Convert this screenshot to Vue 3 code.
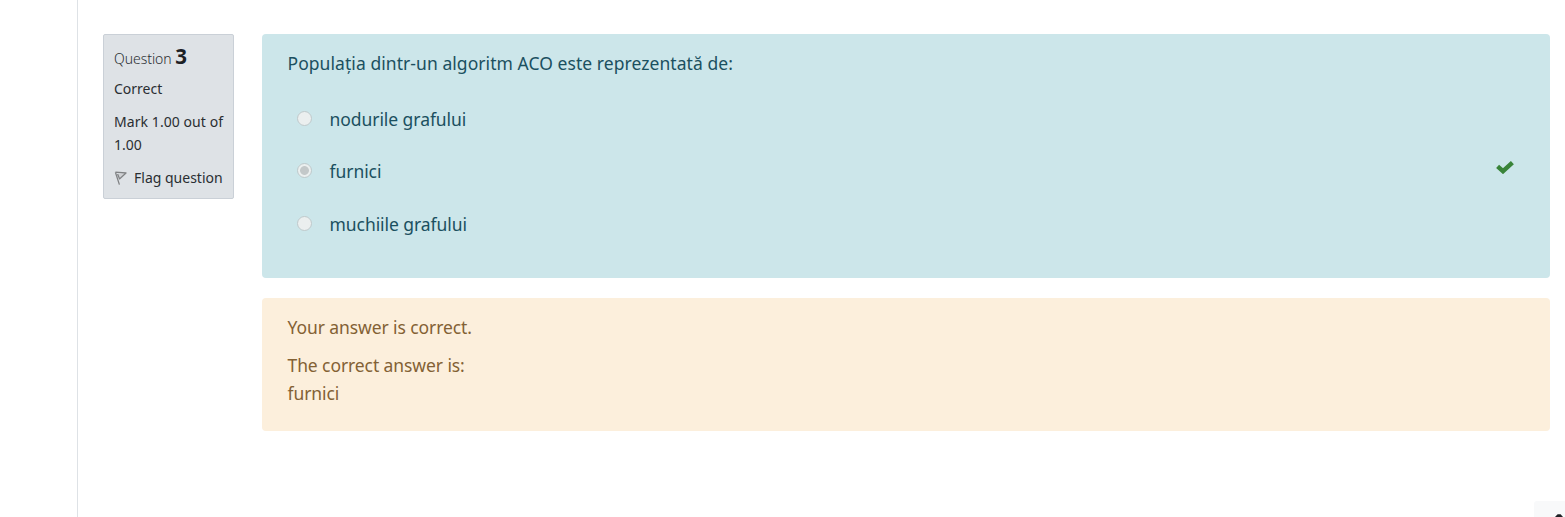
<script setup>
const answers = [
  { id: 'a', text: 'nodurile grafului', checked: false },
  { id: 'b', text: 'furnici', checked: true },
  { id: 'c', text: 'muchiile grafului', checked: false },
]
</script>

<template>
  <div class="page">
    <aside class="drawer"></aside>
    <main class="question">
      <section class="info">
        <h3 class="number">Question <b>3</b></h3>
        <div class="state">Correct</div>
        <div class="grade"><span class="mark">Mark 1.00 out of</span><br>1.00</div>
        <div class="flag">
          <svg class="flag-icon" viewBox="0 0 14 16" fill="none">
            <path d="M4.2 4h6L5.8 7.7Z" fill="#cfd1d4" />
            <path d="M1.4 2.2 12 3 5.2 9.2M1.4 2.2 5.4 14.6M3.6 4l1.8 4.4" stroke="#808284" stroke-width="1.3" stroke-linejoin="round" />
          </svg>
          <span>Flag question</span>
        </div>
      </section>
      <div class="content">
        <section class="formulation">
          <p class="prompt">Populația dintr-un algoritm ACO este reprezentată de:</p>
          <div v-for="answer in answers" :key="answer.id" class="answer">
            <span class="radio" :class="{ checked: answer.checked }"></span>
            <span class="label">{{ answer.text }}</span>
            <svg v-if="answer.checked" class="check" viewBox="0 0 18 14">
              <path d="M1.6 6.3 7 11.2 16.4 2.6" fill="none" stroke="#398439" stroke-width="4.4" />
            </svg>
          </div>
        </section>
        <section class="outcome">
          <p class="verdict">Your answer is correct.</p>
          <p class="right">The correct answer is:<br>furnici</p>
        </section>
      </div>
    </main>
    <div class="footer-button"><svg viewBox="0 0 8 4"><path d="M0 4 2.6 1.2h3L8 4Z" fill="#1d2125" /></svg></div>
  </div>
</template>

<style>
body {
  overflow: hidden;
  background: #fff;
}
</style>

<style scoped>
.page {
  position: relative;
  display: flex;
  height: 517px;
  overflow: hidden;
  font-family: "Noto Sans", "Open Sans", sans-serif;
  color: #2a2e32;
}
.drawer {
  box-sizing: border-box;
  flex: 0 0 78px;
  border-right: 1px solid #dee2e6;
}
.question {
  display: flex;
  flex: 1;
  align-items: flex-start;
  gap: 28px;
  padding: 34px 15px 0 25px;
}
.info {
  box-sizing: border-box;
  flex: 0 0 131px;
  height: 165px;
  padding: 10px 0 0 10px;
  border: 1px solid #cad0d7;
  border-radius: 2px;
  background: #dee2e6;
  font-size: 14px;
  line-height: 23px;
  white-space: nowrap;
}
.number {
  margin: 0;
  height: 23px;
  padding-top: 1px;
  font-size: 14px;
  font-weight: 300;
  line-height: 22px;
  letter-spacing: -0.05px;
}
.number b {
  color: #1d2125;
  font-size: 20.5px;
  font-weight: 700;
  line-height: 20px;
}
.state {
  margin-top: 8px;
}
.grade {
  margin-top: 10px;
}
.mark {
  letter-spacing: 0.07px;
}
.flag {
  display: flex;
  align-items: center;
  gap: 6px;
  margin-top: 10px;
}
.flag-icon {
  width: 14px;
  height: 16px;
}
.content {
  flex: 1;
}
.formulation,
.outcome {
  box-sizing: border-box;
  padding-left: 25.5px;
  border-radius: 4px;
  font-size: 17.5px;
  line-height: 28px;
}
.formulation {
  height: 244px;
  padding-top: 15px;
  background: #cce6ea;
  color: #1b5060;
}
.outcome {
  height: 133px;
  margin-top: 20px;
  padding-top: 15px;
  background: #fcefdc;
  color: #836134;
  letter-spacing: -0.09px;
}
p {
  margin: 0;
}
.prompt {
  margin-bottom: 15.7px;
  letter-spacing: 0.06px;
}
.answer {
  display: flex;
  align-items: center;
  height: 52.5px;
  padding-left: 9.5px;
}
.radio {
  box-sizing: border-box;
  width: 15px;
  height: 15px;
  margin: 0 17.5px 1px 0;
  border: 1px solid #bfc9cb;
  border-radius: 50%;
  background: #ebefef;
}
.radio.checked {
  background: radial-gradient(circle, #c3c8c9 0 4px, #ebefef 4.8px);
}
.label {
  letter-spacing: -0.06px;
}
.check {
  width: 18px;
  height: 14px;
  margin: 0 36px 9px auto;
}
.right {
  margin-top: 10px;
}
.footer-button {
  position: absolute;
  right: 0;
  bottom: 0;
  width: 31px;
  height: 16px;
  border-top-left-radius: 3px;
  background: #f8f9fa;
}
.footer-button svg {
  position: absolute;
  right: 2px;
  bottom: 0;
  width: 8px;
  height: 4px;
}
</style>
